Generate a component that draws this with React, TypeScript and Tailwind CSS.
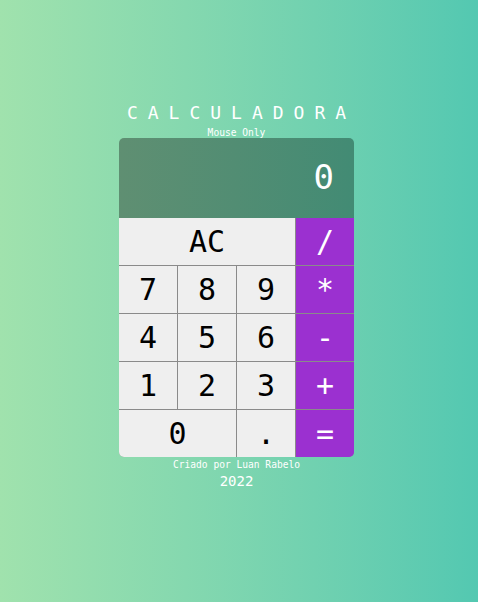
const keys: { label: string; op?: boolean; span?: string }[] = [
  { label: "AC", span: "col-span-3" },
  { label: "/", op: true },
  { label: "7" },
  { label: "8" },
  { label: "9" },
  { label: "*", op: true },
  { label: "4" },
  { label: "5" },
  { label: "6" },
  { label: "-", op: true },
  { label: "1" },
  { label: "2" },
  { label: "3" },
  { label: "+", op: true },
  { label: "0", span: "col-span-2" },
  { label: "." },
  { label: "=", op: true },
];

export default function App() {
  return (
    <div className="min-h-screen w-full flex flex-col items-center justify-center bg-gradient-to-r from-[#a0e2ad] to-[#53c8b1] font-['DejaVu_Sans_Mono',monospace] text-white pb-[10px] pr-[5px]">
      <h1 className="text-[18px] leading-[22px] tracking-[10px] pl-[10px]">CALCULADORA</h1>
      <p className="text-[9.6px] leading-[10px] mt-[4px]">Mouse Only</p>

      <div className="w-[235px] rounded-[5px] overflow-hidden">
        <div className="h-[80px] bg-gradient-to-r from-[#5f8f72] to-[#428b74] flex items-center justify-end pr-[20px] text-[34px]">
          0
        </div>
        <div className="grid grid-cols-4 gap-px bg-[#8a8a8a]">
          {keys.map((k) => (
            <button
              key={k.label}
              className={`h-[47px] flex items-center justify-center text-[30px] ${k.span ?? ""} ${
                k.op ? "bg-[#9b30d0] text-white" : "bg-[#efefef] text-black"
              }`}
            >
              {k.label}
            </button>
          ))}
        </div>
      </div>

      <p className="text-[9.6px] leading-[12px] mt-[2px]">Criado por Luan Rabelo</p>
      <p className="text-[14px] leading-[20px]">2022</p>
    </div>
  );
}
